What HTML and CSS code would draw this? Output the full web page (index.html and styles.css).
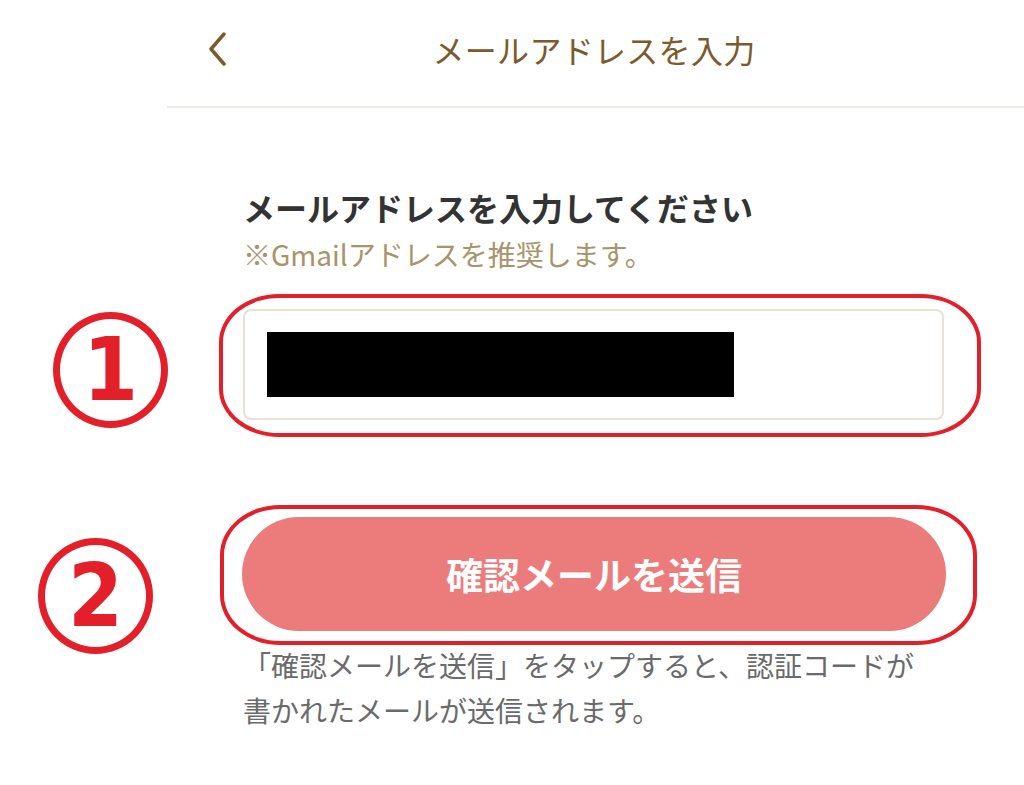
FILE: index.html
```html
<!DOCTYPE html>
<html lang="ja">
<head>
<meta charset="utf-8">
<title>メールアドレスを入力</title>
<link rel="stylesheet" href="styles.css">
</head>
<body>
<div class="app">
  <header class="topbar">
    <button class="back" aria-label="戻る">
      <svg width="22" height="34" viewBox="0 0 22 34"><polyline points="18,2 5,17 18,32" fill="none" stroke="#7b5a2c" stroke-width="3.5" stroke-linecap="round" stroke-linejoin="round"/></svg>
    </button>
    <h1 class="title">メールアドレスを入力</h1>
    <span class="spacer"></span>
  </header>
</div>
<main class="content">
  <h2 class="heading">メールアドレスを入力してください</h2>
  <p class="note">※Gmailアドレスを推奨します。</p>
  <div class="field marked mark-one">
    <div class="field-box"><span class="redact"></span></div>
    <span class="marker marker-one">1</span>
  </div>
  <div class="action marked mark-two">
    <button class="send">確認メールを送信</button>
    <span class="marker marker-two">2</span>
  </div>
  <p class="help">「確認メールを送信」をタップすると、認証コードが<br>書かれたメールが送信されます。</p>
</main>
</body>
</html>
```

FILE: styles.css
```css
html, body {
  margin: 0;
  padding: 0;
  background: #ffffff;
}
body {
  width: 1024px;
  height: 785px;
  overflow: hidden;
  font-family: "Noto Sans CJK JP", "Noto Sans", sans-serif;
}
.app {
  margin-left: 167px;
}
.topbar {
  height: 108px;
  box-sizing: border-box;
  padding-bottom: 8px;
  border-bottom: 2px solid #efede7;
  display: grid;
  grid-template-columns: 1fr auto 1fr;
  align-items: center;
}
.back {
  justify-self: start;
  margin-left: 39px;
  padding: 0;
  border: 0;
  background: none;
  display: flex;
}
.title {
  margin: 0 3px 0 0;
  font-size: 32px;
  font-weight: 400;
  color: #7b5a2c;
  line-height: 44px;
  letter-spacing: 0.3px;
}
.content {
  margin-left: 242px;
  width: 704px;
}
.heading {
  margin: 77px 0 0 1px;
  font-size: 32px;
  font-weight: 700;
  line-height: 44px;
  color: #333333;
}
.note {
  margin: 6px 0 0 1px;
  font-size: 28px;
  line-height: 38px;
  color: #a8946a;
}
.field {
  margin-top: 36px;
  margin-left: 1px;
  width: 701px;
}
.field-box {
  height: 111px;
  box-sizing: border-box;
  border: 2px solid #e8e1d4;
  border-radius: 8px;
  padding: 21px 22px;
}
.redact {
  display: block;
  width: 467px;
  height: 65px;
  background: #000000;
}
.action {
  margin-top: 97px;
}
.send {
  width: 704px;
  height: 114px;
  border: 0;
  border-radius: 57px;
  background: #ec7c7b;
  color: #ffffff;
  font-family: "Noto Sans CJK JP", "Noto Sans", sans-serif;
  font-size: 37px;
  font-weight: 700;
  display: block;
  padding: 0;
}
.help {
  margin: 12px 0 0 1px;
  font-size: 28px;
  line-height: 45px;
  color: #6a6a6a;
}
.marked {
  position: relative;
}
.marked::after {
  content: "";
  position: absolute;
  border: 4px solid #e3202a;
  pointer-events: none;
}
.mark-one::after {
  left: -24px;
  right: -37px;
  top: -15px;
  bottom: -17px;
  border-radius: 60px / 48px;
}
.mark-two::after {
  left: -22px;
  right: -31px;
  top: -12px;
  bottom: -14px;
  border-radius: 60px / 50px;
}
.marker {
  position: absolute;
  box-sizing: border-box;
  border: 7px solid #e3202a;
  border-radius: 50%;
  display: flex;
  align-items: center;
  justify-content: center;
  color: #e3202a;
  font-family: "DejaVu Sans Condensed", "DejaVu Sans", sans-serif;
  font-stretch: condensed;
  font-weight: 700;
  font-size: 88px;
  line-height: 1;
}
.marker-one {
  left: -190px;
  top: 3px;
  width: 115px;
  height: 116px;
}
.marker-two {
  left: -204px;
  top: 21px;
  width: 115px;
  height: 116px;
}
```
